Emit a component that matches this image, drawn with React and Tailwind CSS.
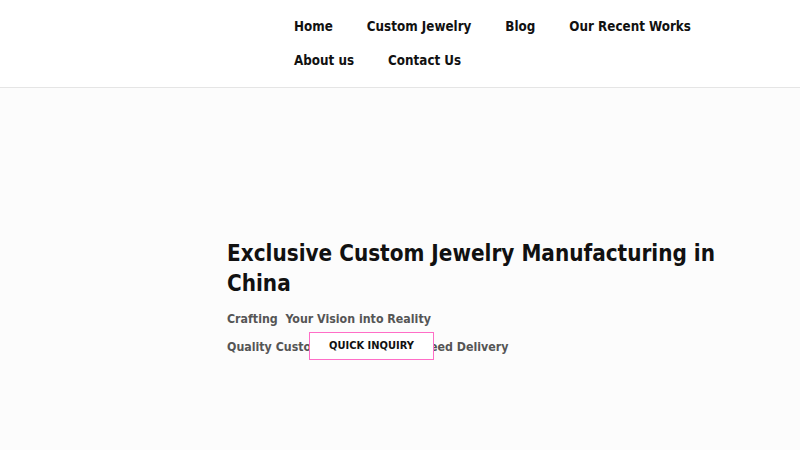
export default function App() {
  return (
    <div className="min-h-[450px] bg-[#fcfcfc] font-['DejaVu_Sans_Condensed','DejaVu_Sans',sans-serif]">
      <header className="bg-white border-b border-[#e5e5e5] h-[88px] pt-[10px]">
        <nav className="ml-[277px] w-[460px] flex flex-wrap text-[13.3px] font-bold text-[#111] leading-[34px]">
          {["Home", "Custom Jewelry", "Blog", "Our Recent Works", "About us", "Contact Us"].map((t) => (
            <a key={t} className="px-[17px] whitespace-nowrap">{t}</a>
          ))}
        </nav>
      </header>
      <section className="pl-[227px] pt-[150px]">
        <h1 className="text-[22.3px] leading-[30px] font-bold text-[#111] w-[520px]">
          Exclusive Custom Jewelry Manufacturing in China
        </h1>
        <div className="mt-[7px] text-[12.3px] leading-[28px] font-bold text-[#555]">
          <p className="whitespace-pre">Crafting  Your Vision into Reality</p>
          <div className="relative">
            <p>Quality Custom Jewelry, Guaranteed Delivery</p>
            <button className="absolute left-[82px] top-[-1px] w-[125px] h-[28px] bg-white border border-[#ff6ec7] text-[11px] font-bold text-[#111] flex items-center justify-center">
              QUICK INQUIRY
            </button>
          </div>
        </div>
      </section>
    </div>
  );
}
